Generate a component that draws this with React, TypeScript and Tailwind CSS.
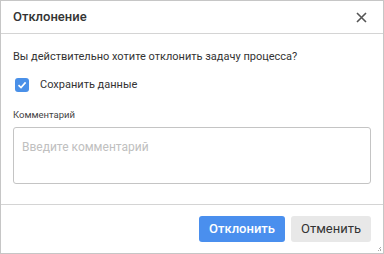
export default function App() {
  return (
    <div className="relative flex h-[254px] w-[384px] flex-col border border-[#c6c6c6] bg-white font-['Roboto',sans-serif] text-[#333]">
      <div className="flex h-[33px] items-center justify-between border-b border-[#d4d4d4] pl-[12px] pr-[16px]">
        <span className="text-[13px] font-medium text-[#333]">Отклонение</span>
        <svg width="11" height="11" viewBox="0 0 11 11" className="text-[#555]">
          <path d="M1 1 L10 10 M10 1 L1 10" stroke="currentColor" strokeWidth="1.6" />
        </svg>
      </div>
      <div className="flex flex-col px-[12px] pt-[15px] pb-[20px]">
        <p className="text-[11px] leading-[16px]">Вы действительно хотите отклонить задачу процесса?</p>
        <label className="mt-[13px] flex items-center gap-[11px] pl-[2px]">
          <span className="flex h-[14px] w-[14px] items-center justify-center rounded-[3px] bg-[#4a90e8]">
            <svg width="10" height="10" viewBox="0 0 10 10">
              <path d="M1.5 5.2 L4 7.6 L8.6 2.4" fill="none" stroke="white" strokeWidth="1.6" />
            </svg>
          </span>
          <span className="text-[11px] leading-[14px]">Сохранить данные</span>
        </label>
        <span className="mt-[16px] text-[9.5px] leading-[14px] text-[#444]">Комментарий</span>
        <div className="mt-[5px] h-[57px] rounded-[3px] border border-[#c4c4c4] px-[8px] pt-[6px]">
          <span className="text-[12px] leading-[16px] text-[#c0c0c0]">Введите комментарий</span>
        </div>
      </div>
      <div className="flex flex-1 items-center justify-end gap-[6px] border-t border-[#d4d4d4] pr-[12px]">
        <button className="h-[26px] w-[86px] rounded-[3px] bg-[#4a8fee] text-[13px] font-medium text-white">Отклонить</button>
        <button className="h-[26px] w-[80px] rounded-[3px] bg-[#e8e8e8] text-[13px] text-[#333]">Отменить</button>
      </div>
      <svg width="5" height="5" viewBox="0 0 5 5" className="absolute bottom-[1px] right-[1px]">
        <rect x="3" y="0" width="1" height="1" fill="#aaa" />
        <rect x="2" y="1" width="1" height="1" fill="#aaa" />
        <rect x="3" y="2" width="1" height="1" fill="#aaa" />
        <rect x="1" y="3" width="1" height="1" fill="#aaa" />
        <rect x="3" y="3" width="1" height="1" fill="#aaa" />
      </svg>
    </div>
  );
}
